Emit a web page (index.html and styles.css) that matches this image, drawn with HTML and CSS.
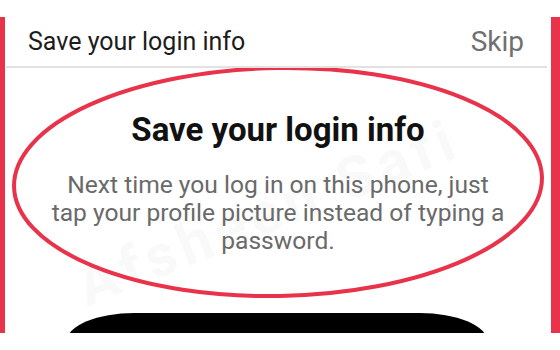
FILE: index.html
```html
<!DOCTYPE html>
<html lang="en">
<head>
  <meta charset="UTF-8">
  <title>Save your login info</title>
  <link rel="stylesheet" href="styles.css">
</head>
<body>
  <!-- Phone frame with red edges -->
  <div class="frame">
    <div class="edge edge-left"></div>

    <div class="screen">
      <!-- Top bar -->
      <div class="top-bar">
        <div class="top-title">Save your login info</div>
        <div class="skip">Skip</div>
      </div>
      <div class="divider"></div>

      <!-- Main content -->
      <div class="content">
        <div class="watermark">Afsheen Safi</div>
        <h1 class="title">Save your login info</h1>
        <p class="text">Next time you log in on this phone, just<br>tap your profile picture instead of typing a<br>password.</p>
        <div class="save-button"></div>

        <!-- Red annotation circle -->
        <svg class="mark" width="546" height="240" viewBox="0 0 546 240">
          <ellipse cx="273" cy="118" rx="264" ry="114" fill="none" stroke="#e8334a" stroke-width="4" transform="rotate(-1 273 118)"/>
        </svg>
      </div>
    </div>

    <div class="edge edge-right"></div>
  </div>
</body>
</html>
```

FILE: styles.css
```css
html, body {
  margin: 0;
  padding: 0;
  background: #fff;
  font-family: Roboto, "Liberation Sans", sans-serif;
}

.frame {
  padding-top: 17px;
  height: 316px;
  display: flex;
  overflow: hidden;
}

.edge {
  background-color: #e8334a;
}

.edge-left {
  width: 5px;
}

.edge-right {
  width: 9px;
}

.screen {
  flex: 1;
  display: flex;
  flex-direction: column;
  min-height: 0;
}

.top-bar {
  height: 49px;
  flex-shrink: 0;
  display: flex;
  align-items: center;
  justify-content: space-between;
  padding: 0 27px 0 23px;
  box-sizing: border-box;
}

.top-title {
  font-size: 25px;
  color: #1c1c1c;
}

.skip {
  font-size: 28px;
  color: #707070;
}

.divider {
  height: 2px;
  flex-shrink: 0;
  background-color: #e2e2e2;
  margin: 0 4px 0 1px;
}

.content {
  position: relative;
  flex: 1;
  min-height: 0;
  overflow: hidden;
  display: flex;
  flex-direction: column;
  align-items: center;
  padding-top: 45px;
}

.title {
  position: relative;
  margin: 0;
  font-size: 33px;
  line-height: 34px;
  font-weight: bold;
  color: #111;
}

.text {
  position: relative;
  margin: 24px 0 0;
  font-size: 24.6px;
  line-height: 28px;
  color: #6a6a6a;
  text-align: center;
  white-space: nowrap;
}

.save-button {
  margin-top: 58px;
  margin-left: -2px;
  width: 420px;
  height: 56px;
  background-color: #000;
  border-radius: 72px / 30px;
  flex-shrink: 0;
}

.mark {
  position: absolute;
  left: 0;
  top: -4px;
}

.watermark {
  position: absolute;
  left: 60px;
  top: 110px;
  font-size: 58px;
  font-weight: bold;
  color: #f9f9f9;
  transform: rotate(-22deg);
  letter-spacing: 6px;
  white-space: nowrap;
}
```
